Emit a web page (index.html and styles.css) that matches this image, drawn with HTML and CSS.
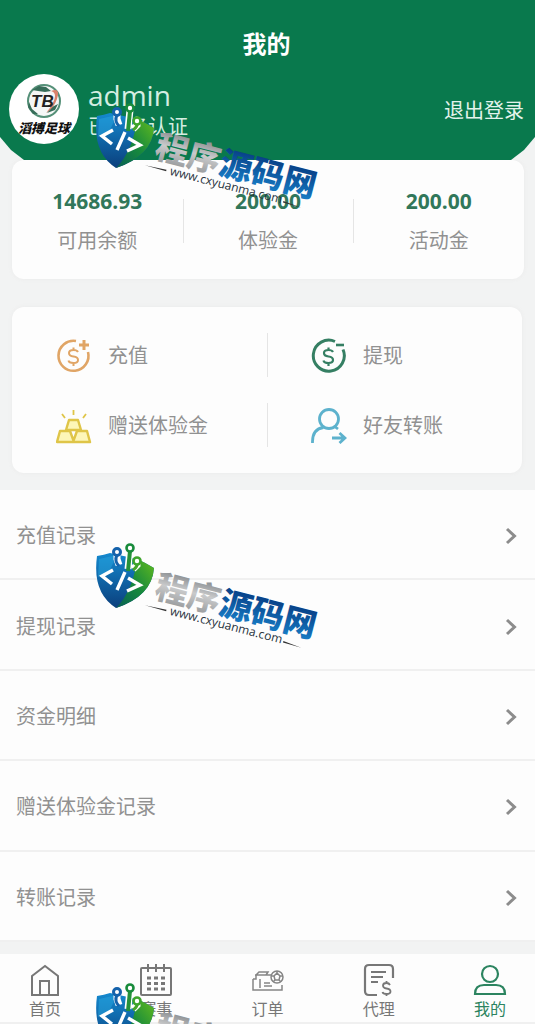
FILE: index.html
```html
<!DOCTYPE html>
<html lang="zh-CN">
<head>
  <meta charset="UTF-8">
  <meta name="viewport" content="width=device-width, initial-scale=1.0">
  <title>我的</title>
  <link rel="stylesheet" href="styles.css">
</head>
<body>

  <!-- shared shapes -->
  <svg class="defs" width="0" height="0" aria-hidden="true">
    <defs>
      <linearGradient id="gBlue" x1="0" y1="0" x2="0" y2="1">
        <stop offset="0" stop-color="#1489cf"/>
        <stop offset="1" stop-color="#0b3f7c"/>
      </linearGradient>
      <linearGradient id="gGreen" x1="1" y1="0" x2="0" y2="1">
        <stop offset="0" stop-color="#63bb1e"/>
        <stop offset="0.5" stop-color="#178a3c"/>
        <stop offset="1" stop-color="#075f56"/>
      </linearGradient>
      <linearGradient id="gSilver" x1="0" y1="0" x2="0" y2="1">
        <stop offset="0.2" stop-color="#8d9093"/>
        <stop offset="0.5" stop-color="#c9cacb"/>
        <stop offset="0.9" stop-color="#96999b"/>
      </linearGradient>
      <linearGradient id="gText" x1="0" y1="0" x2="0" y2="1">
        <stop offset="0.2" stop-color="#073f86"/>
        <stop offset="0.9" stop-color="#187fc8"/>
      </linearGradient>
    </defs>
    <symbol id="shield" viewBox="0 0 60 68">
      <path d="M2 13Q9 12 15 10L42 16Q51 20 59 25Q57 53 21 65Q-3 50 2 13Z" fill="url(#gBlue)"/>
      <path d="M42 16Q51 20 59 25Q57 53 21 65Q38 48 42 16Z" fill="url(#gGreen)"/>
      <path d="M4 16L22 12L14 29L3 34Z" fill="#27a3dc" opacity="0.55"/>
      <path d="M22 12V16L24 22M35 7L33 26M42 19V22L38 26" fill="none" stroke="#fff" stroke-width="7"/>
      <path d="M22 12Q19 18 24 23" fill="none" stroke="#1462ab" stroke-width="3"/>
      <path d="M35 8L33 28" fill="none" stroke="#25913a" stroke-width="4"/>
      <path d="M42 19Q43 24 38 27" fill="none" stroke="#47a629" stroke-width="3"/>
      <circle cx="22" cy="9" r="3.500" fill="#fff" stroke="#1462ab" stroke-width="3"/>
      <circle cx="35" cy="5" r="3.500" fill="#fff" stroke="#188b3b" stroke-width="2.600"/>
      <circle cx="42" cy="18" r="3.500" fill="#fff" stroke="#3da42b" stroke-width="2.600"/>
      <path d="M18 27L7 33L17 41M33 35L45 42L32 48M30 29L22 47" fill="none" stroke="#fff" stroke-width="3.400"/>
    </symbol>
    <symbol id="arrow" viewBox="0 0 12 18">
      <path d="M2 2L9.500 9L2 16" fill="none" stroke="#8c8c8c" stroke-width="3"/>
    </symbol>
  </svg>

  <div class="page">
    <header class="header">
      <h1>我的</h1>
      <div class="user">
        <svg class="avatar" viewBox="0 0 70 70" role="img" aria-label="滔搏足球">
          <circle cx="35" cy="35" r="35" fill="#fff"/>
          <circle cx="35" cy="27" r="16" fill="#f5f7f6" stroke="#559078" stroke-width="2"/>
          <path d="M23 16L30 12L37 13L42 17L36 18L29 17ZM20 28L23 35L29 40L24 40L19 33ZM38 39L46 36L49 30L43 33Z" fill="#376d59"/>
          <path d="M42 17Q52 13 48 25Q45 34 37 39Q46 28 46 22Q46 18 42 17Z" fill="#d9826c"/>
          <text class="logo-tb" x="22" y="33">TB</text>
          <text class="logo-name" x="9" y="59">滔搏足球</text>
        </svg>
        <div class="user-info">
          <div class="user-name">admin</div>
          <div class="user-status">已实名认证</div>
        </div>
        <button type="button" class="logout">退出登录</button>
      </div>
    </header>

    <section class="card balance">
      <div class="balance-item"><b>14686.93</b><span>可用余额</span></div>
      <div class="balance-item"><b>200.00</b><span>体验金</span></div>
      <div class="balance-item"><b>200.00</b><span>活动金</span></div>
    </section>

    <section class="card actions">
      <a href="#" class="action">
        <svg viewBox="0 0 36 36" fill="none" stroke="#e0a566" stroke-width="2.600">
          <path d="M20 3A15 15 0 1 0 32 14"/>
          <path d="M28 2V12M23 7H33" stroke-width="3"/>
          <path d="M22 14Q21 12 17.500 12Q13 12 13 15Q13 18 17.500 18.500Q22 19 22 22Q22 25 17.500 25Q13 25 12.500 22.500M17.500 9.500V12M17.500 25V28" stroke-width="2"/>
        </svg>
        <span>充值</span>
      </a>
      <a href="#" class="action">
        <svg viewBox="0 0 36 36" fill="none" stroke="#357f63" stroke-width="3">
          <path d="M24 3.500A15.500 15.500 0 1 0 32 11.500"/>
          <path d="M25 7H33" stroke-width="2.600"/>
          <path d="M22 14Q21 12 17.500 12Q13 12 13 15Q13 18 17.500 18.500Q22 19 22 22Q22 25 17.500 25Q13 25 12.500 22.500M17.500 9.500V12M17.500 25V28" stroke-width="2.200"/>
        </svg>
        <span>提现</span>
      </a>
      <a href="#" class="action">
        <svg viewBox="0 0 36 36" fill="#fdf6b8" stroke="#dfc548" stroke-width="2.400" stroke-linejoin="round">
          <path d="M13 12H22L25 22H10ZM4 23H14L18 34H1ZM21 23H31L34 34H17Z"/>
          <path d="M17.500 2V7M6 6L9 10M30 6L27 10" stroke-width="1.800"/>
        </svg>
        <span>赠送体验金</span>
      </a>
      <a href="#" class="action">
        <svg viewBox="0 0 36 36" fill="none" stroke="#5db2cd" stroke-width="2.800">
          <circle cx="18" cy="11" r="9.500"/>
          <path d="M1.500 35Q1 21 12.500 19.500M23 18L27 21M21 30H34M28.500 25L34 30L28.500 35"/>
        </svg>
        <span>好友转账</span>
      </a>
    </section>

    <nav class="list">
      <a href="#">充值记录<svg><use href="#arrow"/></svg></a>
      <a href="#">提现记录<svg><use href="#arrow"/></svg></a>
      <a href="#">资金明细<svg><use href="#arrow"/></svg></a>
      <a href="#">赠送体验金记录<svg><use href="#arrow"/></svg></a>
      <a href="#">转账记录<svg><use href="#arrow"/></svg></a>
    </nav>

    <nav class="tabbar">
      <a href="#">
        <svg viewBox="0 0 34 34" fill="none" stroke="#777" stroke-width="2">
          <path d="M4 13L17 3L30 13V32H4ZM12 32V18H21V32"/>
        </svg>
        <span>首页</span>
      </a>
      <a href="#">
        <svg viewBox="0 0 34 34" fill="none" stroke="#777" stroke-width="2">
          <rect x="2" y="5" width="30" height="27" rx="1"/>
          <path d="M9 1V9M17 1V9M25 1V9"/>
          <path d="M8 15H26M8 20.500H26M8 26H26" stroke-width="3" stroke-dasharray="4 3"/>
        </svg>
        <span>赛事</span>
      </a>
      <a href="#">
        <svg viewBox="0 0 34 34" fill="none" stroke="#858585" stroke-width="1.500">
          <path d="M4 12H20M2 16V27H31V22M2 16H5V12L8 9H17L15 12M9 16V25M13 20H19M13 23H21"/>
          <circle cx="26" cy="14" r="6"/>
          <path d="M26 10L29 13L28 17H24L23 13ZM26 8V10M20 13H23M29 13H32M24 17L22 19M28 17L30 19"/>
        </svg>
        <span>订单</span>
      </a>
      <a href="#">
        <svg viewBox="0 0 34 34" fill="none" stroke="#777" stroke-width="2.200">
          <path d="M15 32H7Q3 32 3 28V6Q3 2 7 2H27Q31 2 31 6V15"/>
          <path d="M9 9H24M9 14H21M9 19H16" stroke-width="2"/>
          <path d="M28 22Q27 20 24.500 20Q21 20 21 22.500Q21 25 24.500 25.500Q28.500 26 28.500 28.500Q28.500 31 24.500 31Q21 31 20.500 29M24.500 18V20M24.500 31V33" stroke-width="1.800"/>
        </svg>
        <span>代理</span>
      </a>
      <a href="#" class="active">
        <svg viewBox="0 0 34 34" fill="none" stroke="#2c8460" stroke-width="2.200">
          <circle cx="17" cy="11" r="8"/>
          <path d="M2 31Q2 22 11 22H23Q32 22 32 31Z"/>
        </svg>
        <span>我的</span>
      </a>
    </nav>

    <!-- watermark -->
    <div class="marks">
      <svg class="mark" viewBox="0 0 240 120">
        <use href="#shield" x="5" y="2" width="60" height="68"/>
        <g transform="translate(63 57) rotate(14.5)">
          <text class="mark-name" x="0" y="-1"><tspan class="silver">程序</tspan><tspan class="blue">源码网</tspan></text>
          <text class="mark-url" x="20" y="12">www.cxyuanma.com</text>
          <path d="M-6 9L16 8V9.500ZM137 9V10.500L156 11Z" fill="#333"/>
        </g>
      </svg>
      <svg class="mark" viewBox="0 0 240 120">
        <use href="#shield" x="5" y="2" width="60" height="68"/>
        <g transform="translate(63 57) rotate(14.5)">
          <text class="mark-name" x="0" y="-1"><tspan class="silver">程序</tspan><tspan class="blue">源码网</tspan></text>
          <text class="mark-url" x="20" y="12">www.cxyuanma.com</text>
          <path d="M-6 9L16 8V9.500ZM137 9V10.500L156 11Z" fill="#333"/>
        </g>
      </svg>
      <svg class="mark" viewBox="0 0 240 120">
        <use href="#shield" x="5" y="2" width="60" height="68"/>
        <g transform="translate(63 57) rotate(14.5)">
          <text class="mark-name" x="0" y="-1"><tspan class="silver">程序</tspan></text>
        </g>
      </svg>
    </div>
  </div>

</body>
</html>
```
FILE: styles.css
```css
* {
  box-sizing: border-box;
}

body {
  margin: 0;
  background-color: #f2f3f3;
  color: #919191;
  font-family: "Open Sans", "Noto Sans CJK SC", sans-serif;
  font-size: 20px;
  line-height: 28px;
}

a {
  color: inherit;
  text-decoration: none;
}

.defs {
  position: absolute;
}

.page {
  position: relative;
  display: flex;
  flex-direction: column;
  min-height: 100vh;
}

.header {
  height: 160px;
  padding: 28px 11px 0 9px;
  background-color: #09794d;
  color: #fff;
  clip-path: polygon(0 0, 100% 0, 100% 137px, calc(100% - 11px) 150px, calc(100% - 24px) 160px, 24px 160px, 11px 150px, 0 137px);
}

h1 {
  margin: 0;
  text-align: center;
  font-size: 24px;
  line-height: 32px;
}

.user {
  display: flex;
  align-items: center;
  margin-top: 14px;
}

.avatar {
  width: 70px;
  height: 70px;
}

.logo-tb {
  font: italic bold 17px "Liberation Sans", sans-serif;
  fill: #222;
}

.logo-name {
  font: italic 900 13px "Noto Sans CJK SC", sans-serif;
  fill: #111;
}

.user-info {
  flex: 1;
  margin-left: 9px;
  color: #d5eee2;
}

.user-name {
  font-size: 28px;
  line-height: 36px;
}

.logout {
  padding: 4px 0 0;
  border: none;
  background: none;
  color: #e3f3eb;
  font: inherit;
  cursor: pointer;
}

.card {
  margin: 0 11px 0 12px;
  background-color: #fdfdfd;
  border-radius: 12px;
}

.balance {
  display: grid;
  grid-template-columns: repeat(3, 1fr);
  padding: 27px 0 24px;
  box-shadow: 0 0 4px #eaeaea;
}

.balance-item {
  position: relative;
  display: flex;
  flex-direction: column;
  gap: 12px;
  text-align: center;
}

.balance-item b {
  color: #31775a;
  font-size: 21px;
}

.balance-item + .balance-item::before,
.action:nth-child(even)::before {
  content: "";
  position: absolute;
  left: 0;
  top: 12px;
  width: 1px;
  height: 44px;
  background-color: #e5e5e5;
}

.actions {
  display: grid;
  grid-template-columns: 1fr 1fr;
  margin: 28px 13px 17px 12px;
  padding: 14px 0 12px;
  box-shadow: 0 0 4px #eaeaea;
}

.action {
  position: relative;
  display: flex;
  align-items: center;
  gap: 16px;
  height: 70px;
  padding-left: 44px;
}

.action svg {
  width: 36px;
  height: 36px;
}

.list {
  flex: 1;
  display: flex;
  flex-direction: column;
  background-color: #fdfdfd;
}

.list a {
  flex: 1;
  display: flex;
  align-items: center;
  justify-content: space-between;
  min-height: 64px;
  padding: 4px 18px 0 16px;
  border-bottom: 2px solid #f0f0f0;
}

.list svg {
  width: 12px;
  height: 18px;
}

.tabbar {
  display: flex;
  justify-content: space-between;
  height: 70px;
  margin-top: 12px;
  padding: 9px 17px 0;
  background-color: #fdfdfd;
  border-bottom: 2px solid #f0f0f0;
  color: #777;
  font-size: 16px;
  line-height: 24px;
}

.tabbar a {
  display: flex;
  flex-direction: column;
  align-items: center;
  width: 56px;
}

.tabbar svg {
  width: 34px;
  height: 34px;
}

.tabbar .active {
  color: #2c8460;
}

.marks {
  position: absolute;
  inset: 0;
  overflow: hidden;
  pointer-events: none;
}

.mark {
  display: block;
  width: 240px;
  height: 120px;
  margin: 101px 0 0 90px;
}

.mark + .mark {
  margin-top: 320px;
}

.mark-name {
  font: 900 33px "Noto Sans CJK SC", sans-serif;
}

.silver {
  fill: url(#gSilver);
}

.blue {
  fill: url(#gText);
}

.mark-url {
  font: 12px "Open Sans", sans-serif;
  fill: #26323c;
}
```
